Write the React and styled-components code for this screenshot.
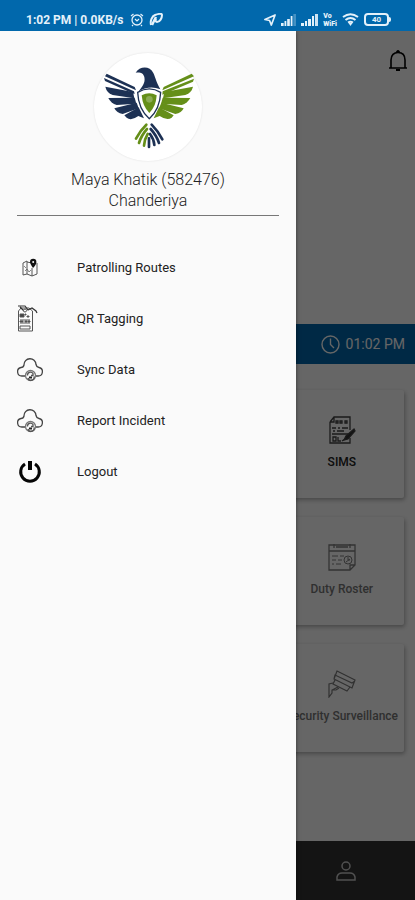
import React from 'react'
import styled, { createGlobalStyle } from 'styled-components'

const GlobalStyle = createGlobalStyle`
  * {
    box-sizing: border-box;
  }
  body {
    margin: 0;
    font-family: Roboto, 'Liberation Sans', sans-serif;
    background: #fafafa;
  }
`

const Eagle = () => (
  <svg width="108" height="108" viewBox="40 24 324 324" aria-hidden="true">
    <g fill="#1d3154">
      <path d="M165 83C176 64 207 61 218 84C225 99 227 112 239 133Q206 119 173 140C184 126 195 114 191 96C188 83 177 81 165 83Z" />
      <path d="M78 86L162 126L166 136L73 94Z" />
      <path d="M70 99L160 139L162 147L152 143L73 108Z" />
      <path d="M74 125L157 141L161 160L96 150Q78 143 74 125Z" />
      <path d="M83 159L162 158L167 176L108 180Q91 175 83 159Z" />
      <path d="M101 190L168 173L174 190L126 207Q108 204 101 190Z" />
      <path d="M131 211L174 187L190 220L173 213Q151 229 138 218Z" />
    </g>
    <g fill="#658f19">
      <path d="M333 86L249 126L245 136L340 94Z" />
      <path d="M340 101L246 139L245 149L337 110Z" />
      <path d="M337 125L251 141L247 160L314 150Q333 143 337 125Z" />
      <path d="M329 159L246 158L241 176L303 180Q320 175 329 159Z" />
      <path d="M309 190L242 173L235 190L284 207Q303 204 309 190Z" />
      <path d="M279 211L235 187L219 220L237 213Q259 228 273 218Z" />
    </g>
    <path d="M171 142Q206 121 240 142Q238 193 206 221Q173 193 171 142Z" fill="#fff" stroke="#1d3154" strokeWidth="4" />
    <path d="M183 151Q206 138 228 151Q226 185 206 204Q186 185 183 151Z" fill="#658f19" />
    <circle cx="206" cy="163" r="10" fill="#8cac54" />
    <g fill="none" strokeWidth="8" strokeLinecap="round">
      <path d="M197 239Q178 257 166 281M199 252Q182 271 175 294M201 267Q191 283 190 302" stroke="#658f19" />
      <path d="M213 239Q232 258 245 283M210 252Q228 272 235 294M208 267Q220 283 221 300M205 280V306" stroke="#1d3154" />
    </g>
  </svg>
)

const AlarmIcon = () => (
  <svg width="14" height="14" viewBox="0 0 14 14" fill="none" stroke="currentColor" aria-hidden="true">
    <circle cx="7" cy="7" r="5" strokeWidth="1.3" />
    <path d="M1 3L3.5 1M13 3L10.5 1M3 12L2 13M11 12L12 13M5 6L7 8L9 6" strokeWidth="1.2" />
  </svg>
)

const LeafIcon = () => (
  <svg width="14" height="14" viewBox="0 0 14 14" fill="none" stroke="currentColor" aria-hidden="true">
    <path d="M2 12C1 8 3 3 6 2C9 1 13 0 13 2C13 5 11 9 8 9Q6 9 7 6" strokeWidth="2" />
    <path d="M3 12L5 8L7 4" strokeWidth="2.5" />
  </svg>
)

const LocationIcon = () => (
  <svg width="12" height="12" viewBox="0 0 13 13" fill="none" stroke="currentColor" strokeWidth="1.8" strokeLinejoin="round" aria-hidden="true">
    <path d="M12 1L1 6L6 7L8 12Z" />
  </svg>
)

const SignalIcon = ({ width }) => (
  <svg width={width} height="12" viewBox="0 0 17 12" fill="currentColor" preserveAspectRatio="none" aria-hidden="true">
    <path d="M0 9H3V12H0ZM4 7H6V12H4ZM7 5H10V12H7ZM11 2H13V12H11Z" />
    <path d="M14 0H17V12H14Z" opacity={width > 15 ? 0.9 : 0.3} />
  </svg>
)

const WifiIcon = () => (
  <svg width="17" height="13" viewBox="0 0 17 13" fill="none" stroke="currentColor" strokeWidth="2" aria-hidden="true">
    <path d="M1 4Q8.5-1.5 16 4M3.5 7Q8.5 3 13.5 7M6 9.5Q8.5 8 11 9.5" />
    <path d="M6.5 10L8.5 13L10.5 10Z" fill="currentColor" stroke="none" />
  </svg>
)

const BellIcon = () => (
  <svg width="20" height="22" viewBox="0 0 20 22" fill="none" stroke="#000" strokeWidth="1.6" aria-hidden="true">
    <path d="M1 18H19M3 18V10C3 5 6 2.5 10 2.5S17 5 17 10V18" />
    <path d="M8.5 2L10 1L11.5 2M8 20H12" strokeWidth="2" />
  </svg>
)

const ClockIcon = () => (
  <svg width="19" height="19" viewBox="0 0 19 19" fill="none" stroke="currentColor" strokeWidth="1.4" aria-hidden="true">
    <circle cx="9.5" cy="9.5" r="8.5" />
    <path d="M9.5 3.5V9.5L13 13" />
  </svg>
)

const MapIcon = () => (
  <svg width="26" height="28" viewBox="0 0 26 28" fill="none" stroke="#555" aria-hidden="true">
    <path d="M6 9L10 7V20L6 21ZM10 8L15 9M10 20L15 22L20 20V9M15 14V22" />
    <path d="M7 12L9 14M8 17L10 15L12 18L14 16" strokeWidth="0.7" />
    <path d="M16 14C14 11 13 9 13 8A3.2 3.2 0 0 1 19.4 8C19.4 10 18 12 16 14Z" fill="#111" stroke="none" />
    <circle cx="16.2" cy="8" r="1" fill="#fafafa" stroke="none" />
  </svg>
)

const TagIcon = () => (
  <svg width="26" height="28" viewBox="0 0 26 28" fill="none" stroke="#555" aria-hidden="true">
    <path d="M1.5 6L4 3H12L15.5 6V26H1.5ZM3 21H13V24H3ZM3 18H13M3 15H13" />
    <path d="M1 1H8L11 5L15 3L19 6L20 8M3 2L7 6" stroke="#333" strokeWidth="1.2" />
    <path d="M3 9H7V12H3ZM8 9H9V10H8ZM10 11H12V12H10ZM3 16H6V17H3ZM8 16H10V17H8ZM11 16H13V17H11Z" fill="#444" />
    <circle cx="8" cy="5.5" r="1.5" fill="#fafafa" />
  </svg>
)

const CloudIcon = () => (
  <svg width="26" height="28" viewBox="0 0 26 28" fill="none" stroke="#444" strokeWidth="1.3" aria-hidden="true">
    <path d="M8 20H5A4.3 4.3 0 0 1 4 11.5Q6.5 11.500 7 9A6 6 0 0 1 19 8.5Q19.500 11 22 11.5A4.3 4.3 0 0 1 21 20H19" />
    <circle cx="13.5" cy="19.5" r="5" stroke="#777" />
    <path d="M10.5 19.5A3 3 0 0 1 16 17.5V19.5H14M17 20.5A3 3 0 0 1 11 22" stroke="#555" />
    <path d="M12 20.500H15V22.500H12Z" fill="#222" stroke="none" />
  </svg>
)

const PowerIcon = () => (
  <svg width="26" height="28" viewBox="0 0 26 28" fill="none" stroke="#050505" strokeWidth="3" aria-hidden="true">
    <path d="M8 6A9.3 9.3 0 1 0 18 6" />
    <path d="M13 3V12" strokeWidth="4" />
  </svg>
)

const ReportIcon = () => (
  <svg width="28" height="28" viewBox="0 0 28 28" fill="none" stroke="#444" strokeWidth="1.3" aria-hidden="true">
    <path d="M2 6L6 1H22V14M2 6V27H22V22M2 6H6V1" />
    <path d="M8 5H10V7H8ZM12 5H14V7H12ZM17 5V7H19V5ZM4 12H8M10 12H12M14 12H20M5 15H7M9 15H16M4 18H20" />
    <path d="M5 21H8V25H5ZM10 21V25H13M14 25L17 23" />
    <path d="M16 24L18 20L26 13L27 15L20 23Z" fill="#333" />
  </svg>
)

const RosterIcon = () => (
  <svg width="28" height="28" viewBox="0 0 28 28" fill="none" stroke="#808080" aria-hidden="true">
    <path d="M1 2H27V22L22 27H1ZM1 8H27M22 27V22H27M6 1V5M22 1V5M8 4H20" strokeWidth="1.3" />
    <path d="M4 13H10M12 13H16M4 17H8M10 17H14M4 21H6M8 21H13" />
    <circle cx="20" cy="17" r="4" />
    <path d="M20 14V17H22M18 19L22 16" />
  </svg>
)

const CameraIcon = () => (
  <svg width="28" height="28" viewBox="0 0 28 28" fill="none" stroke="#7a7a7a" strokeWidth="1.2" aria-hidden="true">
    <path d="M9 1L27 10L24 18L6 9ZM6 9L7 5L24 13L27 11M7 10L5 14L19 21L22 17" />
    <path d="M5 13L1 14V27L4 23V20L10 17M4 20H8L11 18" />
  </svg>
)

const PersonIcon = () => (
  <svg width="20" height="20" viewBox="0 0 20 20" fill="none" stroke="#c8c8c8" strokeWidth="1.5" aria-hidden="true">
    <circle cx="10" cy="5" r="4" />
    <path d="M1 19V16Q2 12 6 12H14Q18 12 19 16V19Z" />
  </svg>
)

const menuItems = [
  { label: 'Patrolling Routes', Icon: MapIcon },
  { label: 'QR Tagging', Icon: TagIcon },
  { label: 'Sync Data', Icon: CloudIcon },
  { label: 'Report Incident', Icon: CloudIcon },
  { label: 'Logout', Icon: PowerIcon },
]

const cards = [
  { label: 'SIMS', Icon: ReportIcon, active: true },
  { label: 'Duty Roster', Icon: RosterIcon },
  { label: 'Security Surveillance', Icon: CameraIcon },
]

const StatusBar = () => (
  <StyledStatusBar>
    <StatusGroup>
      <StatusText>1:02 PM | 0.0KB/s</StatusText>
      <AlarmIcon />
      <LeafIcon />
    </StatusGroup>
    <StatusGroup>
      <LocationIcon />
      <SignalIcon width={15} />
      <SignalIcon width={17} />
      <VoWifi>
        <span>Vo</span>
        <span>WiFi</span>
      </VoWifi>
      <WifiIcon />
      <Battery>40</Battery>
    </StatusGroup>
  </StyledStatusBar>
)

const Dashboard = () => (
  <StyledDashboard>
    <Header>
      <IconButton aria-label="Notifications">
        <BellIcon />
      </IconButton>
    </Header>
    <TimeBar>
      <ClockIcon />
      <time>01:02 PM</time>
    </TimeBar>
    <CardGrid>
      {cards.map(({ label, Icon, active }) => (
        <Card key={label} $active={active}>
          <Icon />
          <CardLabel>{label}</CardLabel>
        </Card>
      ))}
    </CardGrid>
    <BottomNav>
      <IconButton aria-label="Profile">
        <PersonIcon />
      </IconButton>
    </BottomNav>
  </StyledDashboard>
)

const Drawer = () => (
  <StyledDrawer>
    <Profile>
      <Avatar>
        <Eagle />
      </Avatar>
      <ProfileText>Maya Khatik (582476)</ProfileText>
      <ProfileText>Chanderiya</ProfileText>
    </Profile>
    <Menu>
      {menuItems.map(({ label, Icon }) => (
        <li key={label}>
          <MenuLink href="#">
            <Icon />
            {label}
          </MenuLink>
        </li>
      ))}
    </Menu>
  </StyledDrawer>
)

const App = () => (
  <Screen>
    <GlobalStyle />
    <StatusBar />
    <Body>
      <Dashboard />
      <Scrim />
      <Drawer />
    </Body>
  </Screen>
)

const Screen = styled.div`
  display: flex;
  flex-direction: column;
  min-height: 100vh;
`

const StyledStatusBar = styled.header`
  display: flex;
  justify-content: space-between;
  padding: 8px 24px 0 26px;
  height: 31px;
  color: #e4f1fa;
  background: #0168ac;
`

const StatusGroup = styled.div`
  display: flex;
  align-items: center;
  gap: 5px;
`

const StatusText = styled.span`
  margin-right: 2px;
  font-size: 12px;
  font-weight: 700;
`

const VoWifi = styled.span`
  display: flex;
  flex-direction: column;
  font-size: 7px;
  font-weight: 900;
  line-height: 8px;
`

const Battery = styled.span`
  position: relative;
  width: 25px;
  margin-right: 2px;
  border: 2px solid currentColor;
  border-radius: 4px;
  font-size: 8px;
  font-weight: 700;
  line-height: 9px;
  text-align: center;

  &::after {
    content: '';
    position: absolute;
    top: 2px;
    right: -4px;
    width: 2px;
    height: 5px;
    border-radius: 0 2px 2px 0;
    background: currentColor;
  }
`

const Body = styled.div`
  position: relative;
  display: flex;
  flex: 1;
  overflow: hidden;
`

const StyledDashboard = styled.main`
  display: flex;
  flex: 1;
  flex-direction: column;
  background: #fff;
`

const Header = styled.div`
  display: flex;
  justify-content: flex-end;
  align-items: flex-start;
  height: 293px;
  padding: 19px 7px;
`

const IconButton = styled.button`
  display: flex;
  padding: 0;
  border: 0;
  background: none;
  cursor: pointer;
`

const TimeBar = styled.div`
  display: flex;
  justify-content: flex-end;
  align-items: center;
  gap: 6px;
  height: 40px;
  padding: 0 10px;
  font-size: 14px;
  color: #fff;
  background: #0168ac;
`

const CardGrid = styled.div`
  display: grid;
  grid-template-columns: repeat(3, minmax(0, 1fr));
  gap: 19px 10px;
  padding: 26px 11px;
`

const Card = styled.button`
  display: flex;
  flex-direction: column;
  align-items: center;
  grid-column: 3;
  gap: 9px;
  height: 108px;
  padding: 26px 0 0;
  border: 0;
  border-radius: 2px;
  font-family: inherit;
  color: ${(props) => (props.$active ? '#222' : '#777')};
  background: #fff;
  box-shadow: 1px 2px 4px rgba(0, 0, 0, 0.3);
`

const CardLabel = styled.span`
  font-size: 12px;
  font-weight: 500;
  line-height: 18px;
  white-space: nowrap;
`

const BottomNav = styled.nav`
  display: flex;
  justify-content: flex-end;
  align-items: center;
  height: 59px;
  margin-top: auto;
  padding: 0 59px;
  background: #343434;
`

const Scrim = styled.div`
  position: absolute;
  inset: 0;
  background: rgba(0, 0, 0, 0.6);
`

const StyledDrawer = styled.aside`
  position: absolute;
  inset: 0 119px 0 0;
  padding: 22px 17px;
  background: #fafafa;
  box-shadow: 0 0 4px rgba(0, 0, 0, 0.5);
`

const Profile = styled.div`
  display: flex;
  flex-direction: column;
  align-items: center;
  padding-bottom: 4px;
  border-bottom: 1px solid #777;
`

const Avatar = styled.div`
  display: flex;
  margin-bottom: 8px;
  border-radius: 50%;
  background: #fff;
  box-shadow: 0 0 2px rgba(0, 0, 0, 0.12);
`

const ProfileText = styled.div`
  font-size: 16px;
  font-weight: 300;
  line-height: 21px;
  color: #222;
`

const Menu = styled.ul`
  margin: 26px 0 0;
  padding: 0;
  list-style: none;
`

const MenuLink = styled.a`
  display: flex;
  align-items: center;
  gap: 34px;
  height: 51px;
  font-size: 13px;
  color: #222;
  text-decoration: none;
`

export default App
